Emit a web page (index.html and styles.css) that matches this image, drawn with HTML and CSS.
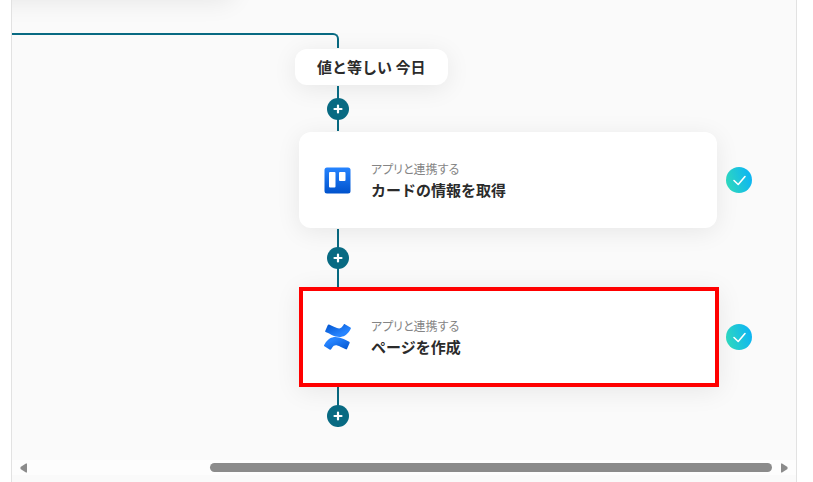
FILE: index.html
```
<!DOCTYPE html>
<html lang="ja">
<head>
    <meta charset="UTF-8">
    <meta name="viewport" content="width=device-width, initial-scale=1.0">
    <title>フローエディタ</title>
    <link rel="stylesheet" href="styles.css">
</head>
<body>
<main class="panel">
    <div class="canvas">
        <div class="previous-card"></div>

        <div class="branch-line"></div>
        <div class="condition">値と等しい 今日</div>

        <div class="connector">
            <button type="button" class="add-button" aria-label="追加">
                <svg viewBox="0 0 22 22"><path d="M11 7.500v7M7.500 11h7"/></svg>
            </button>
        </div>

        <div class="step">
            <div class="card">
                <svg class="app-icon" viewBox="0 0 28 28">
                    <defs>
                        <linearGradient id="trello" x1="0" y1="0" x2="0" y2="1">
                            <stop offset="0" stop-color="#2684ff"/>
                            <stop offset="1" stop-color="#0052cc"/>
                        </linearGradient>
                    </defs>
                    <rect x="1.500" y="1.500" width="26" height="26" rx="2.500" fill="url(#trello)"/>
                    <rect x="6" y="6" width="6.500" height="15.500" rx="1" fill="#fff"/>
                    <rect x="16" y="6" width="6.500" height="9" rx="1" fill="#fff"/>
                </svg>
                <div class="card-text">
                    <p class="card-label">アプリと連携する</p>
                    <p class="card-title">カードの情報を取得</p>
                </div>
            </div>
            <svg class="done" viewBox="0 0 26 26" role="img" aria-label="完了">
                <defs>
                    <linearGradient id="done" x1="0" y1="0.65" x2="1" y2="0.35">
                        <stop offset="0" stop-color="#2fd8bd"/>
                        <stop offset="1" stop-color="#0cb4f5"/>
                    </linearGradient>
                </defs>
                <circle cx="13" cy="13" r="13" fill="url(#done)"/>
                <path d="M8 13.500l4.200 4L19 9.500"/>
            </svg>
        </div>

        <div class="connector connector-long">
            <button type="button" class="add-button" aria-label="追加">
                <svg viewBox="0 0 22 22"><path d="M11 7.500v7M7.500 11h7"/></svg>
            </button>
        </div>

        <div class="step step-selected">
            <div class="card">
                <svg class="app-icon" viewBox="-9 -9 266 266">
                    <defs>
                        <linearGradient id="confluence" x1="1" y1="1" x2="0.3" y2="0.3">
                            <stop offset="0" stop-color="#0052cc"/>
                            <stop offset="1" stop-color="#2684ff"/>
                        </linearGradient>
                        <path id="wave" d="M9 187C7 192 4 197 1 201c-2 4-1 9 3 11l53 32c4 2 9 1 11-3 2-4 5-8 8-13 21-34 42-30 80-12l52 25c4 2 9 0 11-4l25-57c2-4 0-9-4-11-11-5-33-15-53-25C116 110 56 112 9 187z"/>
                    </defs>
                    <use href="#wave" fill="url(#confluence)"/>
                    <use href="#wave" fill="url(#confluence)" transform="rotate(180 128 123)"/>
                </svg>
                <div class="card-text">
                    <p class="card-label">アプリと連携する</p>
                    <p class="card-title">ページを作成</p>
                </div>
            </div>
            <svg class="done" viewBox="0 0 26 26" role="img" aria-label="完了">
                <circle cx="13" cy="13" r="13" fill="url(#done)"/>
                <path d="M8 13.500l4.200 4L19 9.500"/>
            </svg>
        </div>

        <div class="connector connector-last">
            <button type="button" class="add-button" aria-label="追加">
                <svg viewBox="0 0 22 22"><path d="M11 7.500v7M7.500 11h7"/></svg>
            </button>
        </div>
    </div>

    <div class="scrollbar">
        <button type="button" class="scroll-button" aria-label="左へスクロール">
            <svg viewBox="0 0 7 10"><path d="M6 0.500h1v9H6L0.500 6V4z"/></svg>
        </button>
        <div class="track">
            <div class="thumb"></div>
        </div>
        <button type="button" class="scroll-button" aria-label="右へスクロール">
            <svg viewBox="0 0 7 10"><path d="M1 0.500H0v9h1L6.500 6V4z"/></svg>
        </button>
    </div>
</main>
</body>
</html>
```

FILE: styles.css
```
* {
    box-sizing: border-box;
}
body {
    margin: 0;
    background-color: #fff;
    color: #2b2b2b;
    font-family: "Noto Sans CJK JP", sans-serif;
}
.panel {
    display: flex;
    flex-direction: column;
    min-height: 100vh;
    margin: 0 16px 0 11px;
    padding-bottom: 7px;
    border: solid #e2e2e2;
    border-width: 0 1px;
    background-color: #fafafa;
}
.canvas {
    position: relative;
    flex: 1;
    padding: 33px 44px 33px 0;
    overflow: hidden;
}
button {
    padding: 0;
    border: none;
    background: none;
    cursor: pointer;
}
svg {
    display: block;
    flex-shrink: 0;
}

/* Card of the parent step, mostly scrolled out above the canvas */
.previous-card {
    position: absolute;
    top: -98px;
    left: -196px;
    width: 418px;
    height: 96px;
    border-radius: 12px;
    background-color: #fff;
    box-shadow: 0 4px 24px rgba(0, 0, 0, 0.08);
}

/* Lines between steps */
.branch-line {
    width: 327px;
    height: 15px;
    margin-bottom: 1px;
    border: solid #086a82;
    border-width: 2px 2px 0 0;
    border-radius: 0 6px 0 0;
}
.connector {
    display: flex;
    align-items: center;
    width: 22px;
    height: 45px;
    margin: 1px 0 1px 315px;
    background: linear-gradient(#086a82, #086a82) center / 2px 100% no-repeat;
}
.connector-long {
    height: 58px;
    margin-bottom: 0;
}
.connector-last {
    align-items: flex-end;
    height: 40px;
    margin-top: 0;
    margin-bottom: 0;
}
.add-button {
    width: 22px;
    height: 22px;
    border-radius: 50%;
    background-color: #086a82;
}
.add-button path {
    fill: none;
    stroke: #fff;
    stroke-width: 2.2;
    stroke-linecap: round;
}

/* Steps */
.condition {
    width: fit-content;
    margin-left: 283px;
    padding: 6px 23px 6px 22px;
    border-radius: 12px;
    background-color: #fff;
    box-shadow: 0 4px 24px rgba(0, 0, 0, 0.08);
    font-size: 15px;
    font-weight: 700;
    line-height: 24px;
}
.step {
    display: flex;
    align-items: center;
    gap: 9px;
    margin-left: 287px;
}
.card {
    display: flex;
    flex: 1;
    align-items: center;
    gap: 20px;
    height: 96px;
    padding: 0 24px;
    border-radius: 12px;
    background-color: #fff;
    box-shadow: 0 4px 24px rgba(0, 0, 0, 0.08);
}
.step-selected {
    gap: 7px;
}
.step-selected .card {
    height: 100px;
    padding: 0 20px;
    border: 4px solid #f00;
    border-radius: 0;
}
.app-icon {
    width: 28px;
    height: 28px;
}
.card-text p {
    margin: 0;
}
.card-label {
    color: #858585;
    font-size: 12px;
    font-feature-settings: "palt";
    line-height: 18px;
}
.card-title {
    font-size: 15px;
    font-weight: 700;
    line-height: 23px;
}
.done {
    width: 26px;
    height: 26px;
}
.done path {
    fill: none;
    stroke: #fff;
    stroke-width: 1.6;
    stroke-linecap: round;
    stroke-linejoin: round;
}

/* Horizontal scrollbar */
.scrollbar {
    display: flex;
    align-items: center;
    gap: 9px;
    height: 15px;
    padding: 0 8px;
    background-color: #fdfdfd;
}
.scroll-button {
    width: 7px;
    height: 10px;
}
.scroll-button path {
    fill: #8b8b8b;
}
.track {
    flex: 1;
}
.thumb {
    width: 76.4%;
    height: 9px;
    margin-left: auto;
    border-radius: 5px;
    background-color: #8b8b8b;
}
```
